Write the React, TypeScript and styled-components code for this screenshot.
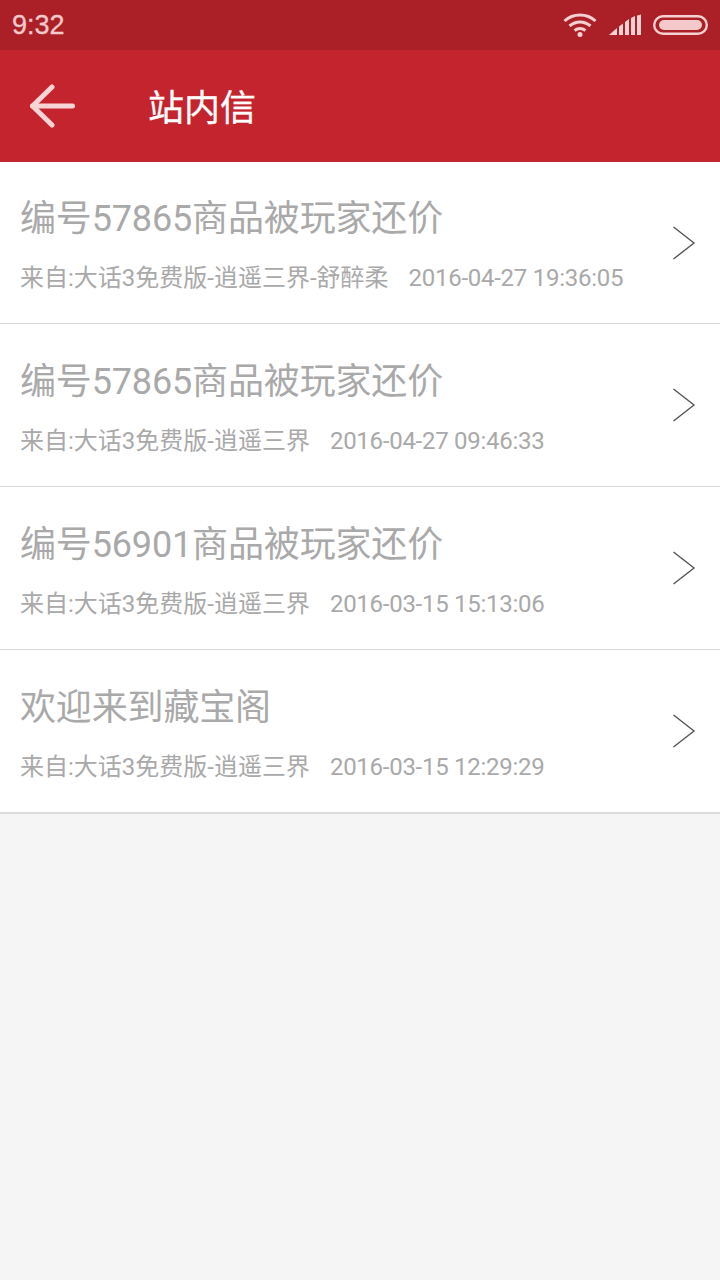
import React from 'react';
import styled, { createGlobalStyle } from 'styled-components';

const messages = [
  { title: '编号57865商品被玩家还价', source: '来自:大话3免费版-逍遥三界-舒醉柔', time: '2016-04-27 19:36:05' },
  { title: '编号57865商品被玩家还价', source: '来自:大话3免费版-逍遥三界', time: '2016-04-27 09:46:33' },
  { title: '编号56901商品被玩家还价', source: '来自:大话3免费版-逍遥三界', time: '2016-03-15 15:13:06' },
  { title: '欢迎来到藏宝阁', source: '来自:大话3免费版-逍遥三界', time: '2016-03-15 12:29:29' },
];

const GlobalStyle = createGlobalStyle`
  html, body {
    margin: 0;
    padding: 0;
    background: #f5f5f5;
    font-family: Roboto, "Noto Sans CJK SC", sans-serif;
  }
`;

const Page = styled.div`
  width: 720px;
  height: 1280px;
  overflow: hidden;
  background: #f5f5f5;
`;

const StatusBar = styled.div`
  height: 50px;
  background: #ab2027;
  color: #f3c9cb;
  display: flex;
  align-items: center;
  justify-content: space-between;
  padding: 0 12px;
  box-sizing: border-box;
`;

const Clock = styled.span`
  font-size: 27px;
  font-family: "Liberation Sans", sans-serif;
  -webkit-text-stroke: 0.3px #f3c9cb;
`;

const StatusIcons = styled.div`
  display: flex;
  align-items: center;
  gap: 11px;
`;

const Toolbar = styled.div`
  height: 112px;
  background: #c4242e;
  display: flex;
  align-items: center;
  padding-left: 29px;
  box-sizing: border-box;
`;

const BackButton = styled.div`
  width: 120px;
  display: flex;
  align-items: center;
  margin-bottom: 1px;
`;

const ToolbarTitle = styled.h1`
  margin: 0 0 2px -1px;
  font-size: 36px;
  font-weight: 400;
  color: #fff;
  -webkit-text-stroke: 0.3px #fff;
`;

const List = styled.div`
  background: #fff;
  border-bottom: 2px solid #dcdcdc;
`;

const Row = styled.div`
  height: 163px;
  box-sizing: border-box;
  padding: 0 24px 0 20px;
  display: flex;
  align-items: center;
  justify-content: space-between;
  &:first-child {
    height: 161px;
  }
  & + & {
    border-top: 1px solid #d8d8d8;
  }
`;

const RowText = styled.div`
  display: flex;
  flex-direction: column;
  gap: 18px;
  padding-top: 3px;
`;

const RowTitle = styled.div`
  font-size: 36px;
  line-height: 50px;
  letter-spacing: -0.15px;
  color: #a9a9a9;
`;

const RowMeta = styled.div`
  display: flex;
  gap: 20px;
  font-size: 24px;
  line-height: 32px;
  color: #a9a9a9;
`;

const RowTime = styled.span`
  letter-spacing: -0.27px;
`;

const Chevron = () => (
  <svg width="24" height="36" viewBox="0 0 24 36" fill="none">
    <path d="M1.5 2 L22 18 L1.5 34" stroke="#555" strokeWidth="1.4" />
  </svg>
);

const App = () => (
  <Page>
    <GlobalStyle />
    <StatusBar>
      <Clock>9:32</Clock>
      <StatusIcons>
        <svg width="34" height="24" viewBox="0 0 34 24" fill="none" stroke="#f6d0d2" strokeWidth="3">
          <path d="M1.5 8 C10 0 24 0 32.5 8" />
          <path d="M6.5 13 C13 7.5 21 7.5 27.5 13" />
          <path d="M11.5 17.5 C15 15 19 15 22.5 17.5" />
          <circle cx="17" cy="21.5" r="2.5" fill="#f6d0d2" stroke="none" />
        </svg>
        <svg width="34" height="22" viewBox="0 0 34 22" fill="#f6d0d2">
          <path d="M1 21 L9 14 V21 Z" />
          <path d="M11 12.5 L15 9.5 V21 H11 Z" />
          <path d="M17 8 L21 5 V21 H17 Z" />
          <path d="M23 4 L27 2 V21 H23 Z" />
          <path d="M29 1.5 L33 0.5 V21 H29 Z" />
        </svg>
        <svg width="55" height="20" viewBox="0 0 55 20" fill="none">
          <rect x="1.2" y="1.2" width="52.6" height="17.6" rx="8.8" stroke="#f6d0d2" strokeWidth="2.4" />
          <rect x="6" y="5" width="43" height="10" rx="5" fill="#f3c9cb" />
        </svg>
      </StatusIcons>
    </StatusBar>
    <Toolbar>
      <BackButton>
        <svg width="46" height="44" viewBox="0 0 46 44" fill="none" stroke="#f8d4d6" strokeWidth="5" strokeLinecap="round" strokeLinejoin="round">
          <path d="M43.5 22 H3.5" />
          <path d="M23 3 L3.5 22 L23 41" />
        </svg>
      </BackButton>
      <ToolbarTitle>站内信</ToolbarTitle>
    </Toolbar>
    <List>
      {messages.map((m) => (
        <Row key={m.time}>
          <RowText>
            <RowTitle>{m.title}</RowTitle>
            <RowMeta>
              <span>{m.source}</span>
              <RowTime>{m.time}</RowTime>
            </RowMeta>
          </RowText>
          <Chevron />
        </Row>
      ))}
    </List>
  </Page>
);

export default App;
